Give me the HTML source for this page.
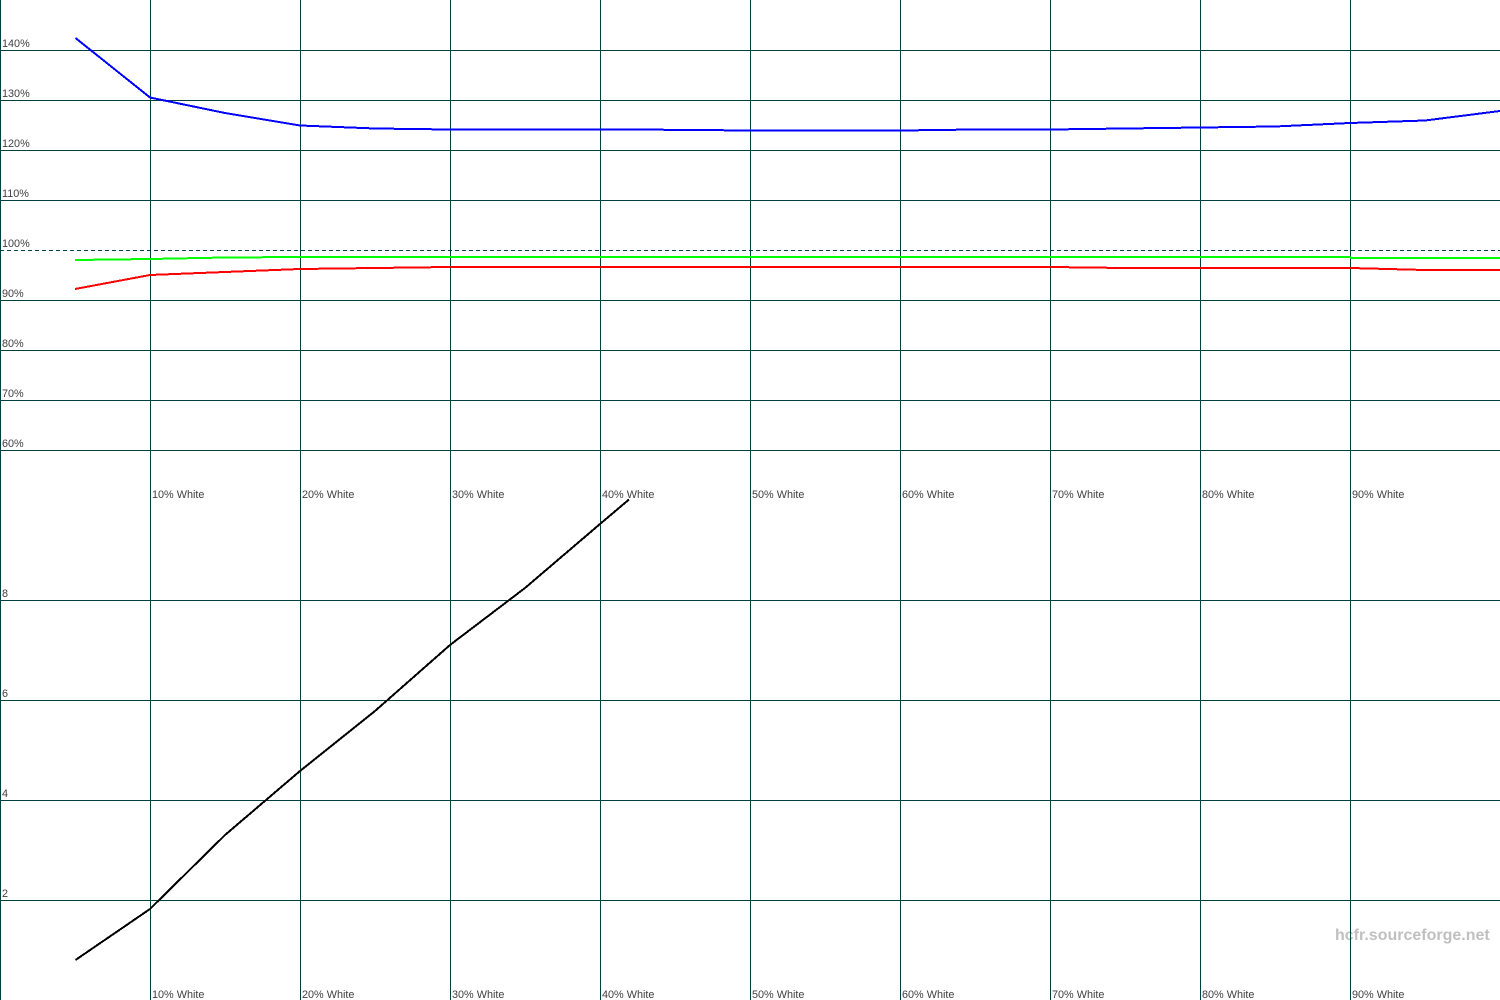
<!DOCTYPE html>
<html><head><meta charset="utf-8"><style>
html,body{margin:0;padding:0;background:#fff;width:1500px;height:1000px;overflow:hidden}
svg{display:block}
text{font-family:"Liberation Sans",Arial,sans-serif;font-size:10.85px;fill:#404040}
</style></head><body>
<svg width="1500" height="1000" viewBox="0 0 1500 1000" xmlns="http://www.w3.org/2000/svg">
<text x="1335" y="940" style="font-size:16px;font-weight:bold;fill:#c0c0c0">hcfr.sourceforge.net</text>
<g stroke="#004040" stroke-width="1" shape-rendering="crispEdges" fill="none">
<path d="M.5 0V1000M150.5 0V1000M300.5 0V1000M450.5 0V1000M600.5 0V1000M750.5 0V1000M900.5 0V1000M1050.5 0V1000M1200.5 0V1000M1350.5 0V1000"/>
<path d="M0 50.5H1500M0 100.5H1500M0 150.5H1500M0 200.5H1500M0 300.5H1500M0 350.5H1500M0 400.5H1500M0 450.5H1500M0 600.5H1500M0 700.5H1500M0 800.5H1500M0 900.5H1500"/>
<path d="M0 250.5H1500" stroke-dasharray="4 3"/>
</g>
<g>
<text x="2" y="47">140%</text><text x="2" y="97">130%</text><text x="2" y="147">120%</text><text x="2" y="197">110%</text><text x="2" y="247">100%</text><text x="2" y="297">90%</text><text x="2" y="347">80%</text><text x="2" y="397">70%</text><text x="2" y="447">60%</text>
<text x="2" y="597">8</text><text x="2" y="697">6</text><text x="2" y="797">4</text><text x="2" y="897">2</text>
<text x="152" y="498">10% White</text><text x="302" y="498">20% White</text><text x="452" y="498">30% White</text><text x="602" y="498">40% White</text><text x="752" y="498">50% White</text><text x="902" y="498">60% White</text><text x="1052" y="498">70% White</text><text x="1202" y="498">80% White</text><text x="1352" y="498">90% White</text>
<text x="152" y="998">10% White</text><text x="302" y="998">20% White</text><text x="452" y="998">30% White</text><text x="602" y="998">40% White</text><text x="752" y="998">50% White</text><text x="902" y="998">60% White</text><text x="1052" y="998">70% White</text><text x="1202" y="998">80% White</text><text x="1352" y="998">90% White</text>
</g>
<g fill="none" stroke-width="2" stroke-linejoin="round" shape-rendering="crispEdges">
<polyline stroke="#0000ff" points="75.5,38 150,97.5 225,113 300,125.5 375,128.5 450,129.5 525,129.5 600,129.5 675,129.8 750,130.5 825,130.5 900,130.5 975,129.5 1050,129.5 1125,128.5 1200,127.5 1275,126.5 1350,123 1425,120.5 1500,111"/>
<polyline stroke="#00ff00" points="75,260 150,259 225,257.5 300,257 1050,257 1350,257 1351,258 1500,258"/>
<polyline stroke="#ff0000" points="75,289 150,275 225,272 300,269 375,268 450,267 1050,267 1125,268 1350,268 1425,270 1500,270"/>
<polyline stroke="#000000" points="75.5,960 150,909 225,835 300,771 375,711 450,645 525,588 600,524 629,499.5"/>
</g>
</svg>
</body></html>
